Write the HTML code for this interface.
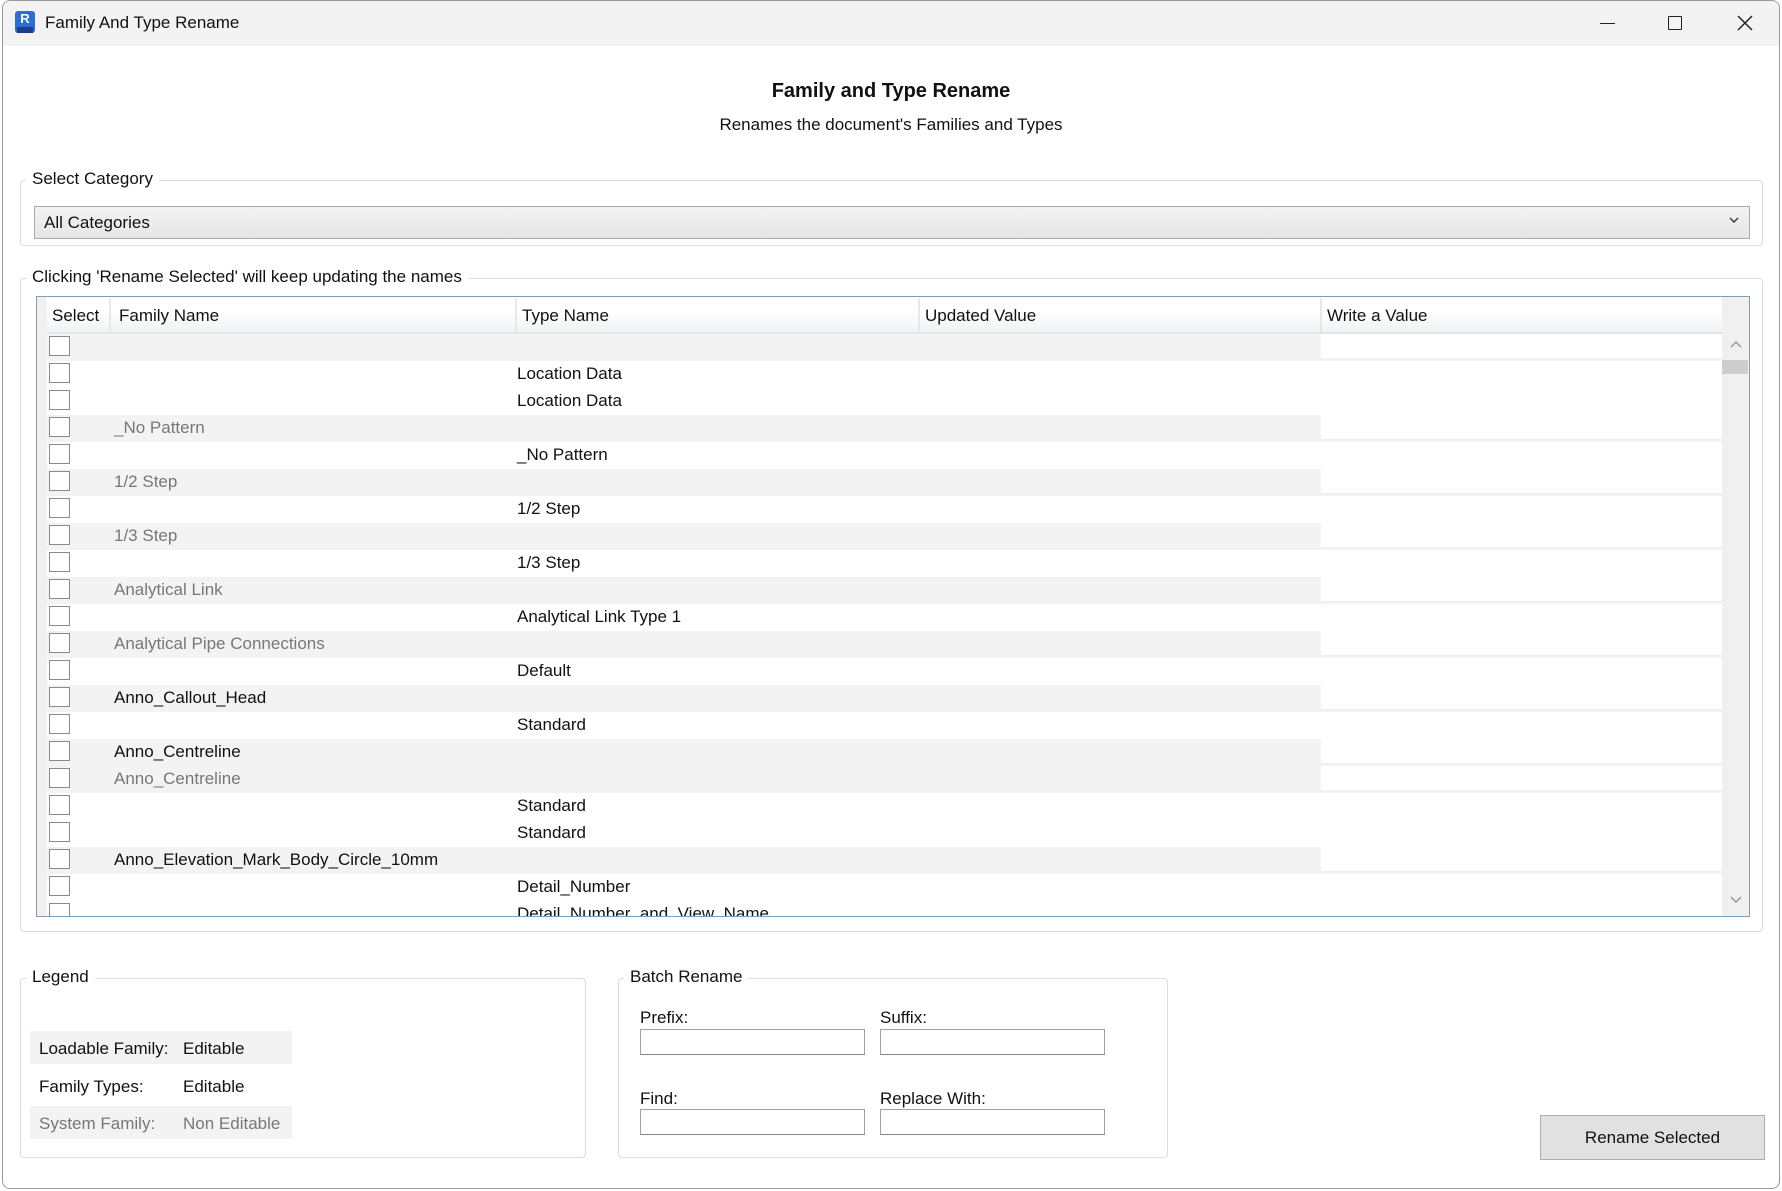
<!DOCTYPE html>
<html><head><meta charset="utf-8"><style>
*{box-sizing:border-box;margin:0;padding:0}
body{width:1782px;height:1191px;background:#fff;font-family:"Liberation Sans",sans-serif;font-size:17px;color:#111;position:relative;overflow:hidden}
.abs{position:absolute}
.win{left:2px;top:0;width:1778px;height:1189px;border:1px solid #9a9a9a;border-radius:8px;background:#fff;overflow:hidden}
.title{left:0;top:0;width:100%;height:45px;background:#f3f3f3}
.gb{border:1px solid #d5dde5;border-radius:4px}
.gl{background:#fff;padding:0 6px;font-size:17px}
.cb{position:absolute;left:2px;width:21px;height:20px;border:1.5px solid #8a8a8a;background:#fff}
.row{position:absolute;left:10px;width:1675px;height:27px}
.row.g{background:#f3f3f3}
.row .w{position:absolute;left:1274px;width:401px;top:0;height:25px;background:#fff;border-bottom:1px solid #eee}
.t{position:absolute;top:3px;font-size:17px}
.gr{color:#777}
.inp{position:absolute;height:26px;width:225px;border:1px solid #a0a0a0;border-bottom-color:#888;background:#fff}
</style></head><body>
<div class="abs win">
 <div class="abs title"></div>
 <div class="abs" style="left:12px;top:10px;width:20px;height:22px;background:#2a6fd6;border-radius:3px;color:#fff;font-size:13px;font-weight:bold;text-align:center;line-height:16px">R<div style="background:#1b3f88;height:6px;margin:0 2px"></div></div>
 <div class="abs" style="left:42px;top:12px;font-size:17px">Family And Type Rename</div>
 <div class="abs" style="left:1597px;top:22px;width:15px;height:1px;background:#222"></div>
 <div class="abs" style="left:1665px;top:15px;width:14px;height:14px;border:1.5px solid #222;border-radius:1px"></div>
 <svg class="abs" style="left:1734px;top:14px" width="16" height="16"><path d="M1 1L15 15M15 1L1 15" stroke="#222" stroke-width="1.5"/></svg>

 <div class="abs" style="left:0;width:100%;top:79px;text-align:center;font-weight:bold;font-size:20px">Family and Type Rename</div>
 <div class="abs" style="left:0;width:100%;top:114px;text-align:center;font-size:17px">Renames the document's Families and Types</div>

 <div class="abs gb" style="left:17px;top:179px;width:1743px;height:66px"></div>
 <div class="abs gl" style="left:23px;top:168px">Select Category</div>
 <div class="abs" style="left:31px;top:205px;width:1716px;height:33px;border:1px solid #aaa;background:linear-gradient(#f3f3f3,#e6e6e6)"></div>
 <div class="abs" style="left:41px;top:212px">All Categories</div>
 <svg class="abs" style="left:1725px;top:214px" width="12" height="10"><path d="M2 3L6 7L10 3" stroke="#333" fill="none" stroke-width="1.4"/></svg>

 <div class="abs gb" style="left:17px;top:277px;width:1743px;height:654px"></div>
 <div class="abs gl" style="left:23px;top:266px">Clicking 'Rename Selected' will keep updating the names</div>

 <div class="abs" style="left:33px;top:295px;width:1714px;height:621px;border:1px solid #7f9db9;overflow:hidden;background:#fff">
  <div class="abs" style="left:0;top:0;width:10px;height:621px;background:#f0f0f0"></div>
  <div class="abs" style="left:10px;top:1px;width:1675px;height:36px;background:linear-gradient(#fff 40%,#f1f2f4);border-bottom:2px solid #e3e5e8"></div>
  <div class="abs" style="left:72px;top:1px;width:2px;height:34px;background:#e6e8ea"></div>
  <div class="abs" style="left:478px;top:1px;width:2px;height:34px;background:#e6e8ea"></div>
  <div class="abs" style="left:881px;top:1px;width:2px;height:34px;background:#e6e8ea"></div>
  <div class="abs" style="left:1283px;top:1px;width:2px;height:34px;background:#e6e8ea"></div>
  <div class="t" style="left:15px;top:9px">Select</div>
  <div class="t" style="left:82px;top:9px">Family Name</div>
  <div class="t" style="left:485px;top:9px">Type Name</div>
  <div class="t" style="left:888px;top:9px">Updated Value</div>
  <div class="t" style="left:1290px;top:9px">Write a Value</div>

  <div class="row g" style="top:37px"><div class="w"></div><div class="cb" style="top:2px"></div></div>
  <div class="row" style="top:64px"><div class="cb" style="top:2px"></div><div class="t" style="left:470px">Location Data</div></div>
  <div class="row" style="top:91px"><div class="cb" style="top:2px"></div><div class="t" style="left:470px">Location Data</div></div>
  <div class="row g" style="top:118px"><div class="w"></div><div class="cb" style="top:2px"></div><div class="t gr" style="left:67px">_No Pattern</div></div>
  <div class="row" style="top:145px"><div class="cb" style="top:2px"></div><div class="t" style="left:470px">_No Pattern</div></div>
  <div class="row g" style="top:172px"><div class="w"></div><div class="cb" style="top:2px"></div><div class="t gr" style="left:67px">1/2 Step</div></div>
  <div class="row" style="top:199px"><div class="cb" style="top:2px"></div><div class="t" style="left:470px">1/2 Step</div></div>
  <div class="row g" style="top:226px"><div class="w"></div><div class="cb" style="top:2px"></div><div class="t gr" style="left:67px">1/3 Step</div></div>
  <div class="row" style="top:253px"><div class="cb" style="top:2px"></div><div class="t" style="left:470px">1/3 Step</div></div>
  <div class="row g" style="top:280px"><div class="w"></div><div class="cb" style="top:2px"></div><div class="t gr" style="left:67px">Analytical Link</div></div>
  <div class="row" style="top:307px"><div class="cb" style="top:2px"></div><div class="t" style="left:470px">Analytical Link Type 1</div></div>
  <div class="row g" style="top:334px"><div class="w"></div><div class="cb" style="top:2px"></div><div class="t gr" style="left:67px">Analytical Pipe Connections</div></div>
  <div class="row" style="top:361px"><div class="cb" style="top:2px"></div><div class="t" style="left:470px">Default</div></div>
  <div class="row g" style="top:388px"><div class="w"></div><div class="cb" style="top:2px"></div><div class="t" style="left:67px">Anno_Callout_Head</div></div>
  <div class="row" style="top:415px"><div class="cb" style="top:2px"></div><div class="t" style="left:470px">Standard</div></div>
  <div class="row g" style="top:442px"><div class="w"></div><div class="cb" style="top:2px"></div><div class="t" style="left:67px">Anno_Centreline</div></div>
  <div class="row g" style="top:469px"><div class="w"></div><div class="cb" style="top:2px"></div><div class="t gr" style="left:67px">Anno_Centreline</div></div>
  <div class="row" style="top:496px"><div class="cb" style="top:2px"></div><div class="t" style="left:470px">Standard</div></div>
  <div class="row" style="top:523px"><div class="cb" style="top:2px"></div><div class="t" style="left:470px">Standard</div></div>
  <div class="row g" style="top:550px"><div class="w"></div><div class="cb" style="top:2px"></div><div class="t" style="left:67px">Anno_Elevation_Mark_Body_Circle_10mm</div></div>
  <div class="row" style="top:577px"><div class="cb" style="top:2px"></div><div class="t" style="left:470px">Detail_Number</div></div>
  <div class="row" style="top:604px"><div class="cb" style="top:2px"></div><div class="t" style="left:470px">Detail_Number_and_View_Name</div></div>

  <div class="abs" style="left:1685px;top:0;width:28px;height:621px;background:#f0f0f0"></div>
  <div class="abs" style="left:1685px;top:63px;width:26px;height:14px;background:#cdcdcd"></div>
  <svg class="abs" style="left:1692px;top:42px" width="14" height="10"><path d="M2 8L7 3L12 8" stroke="#999" fill="none" stroke-width="1.5"/></svg>
  <svg class="abs" style="left:1692px;top:598px" width="14" height="10"><path d="M2 2L7 7L12 2" stroke="#999" fill="none" stroke-width="1.5"/></svg>
 </div>

 <div class="abs gb" style="left:17px;top:977px;width:566px;height:180px"></div>
 <div class="abs gl" style="left:23px;top:966px">Legend</div>
 <div class="abs" style="left:27px;top:1030px;width:262px;height:33px;background:#f3f3f3"></div>
 <div class="abs" style="left:27px;top:1105px;width:262px;height:33px;background:#f3f3f3"></div>
 <div class="abs" style="left:36px;top:1038px">Loadable Family:</div><div class="abs" style="left:180px;top:1038px">Editable</div>
 <div class="abs" style="left:36px;top:1076px">Family Types:</div><div class="abs" style="left:180px;top:1076px">Editable</div>
 <div class="abs gr" style="left:36px;top:1113px">System Family:</div><div class="abs gr" style="left:180px;top:1113px">Non Editable</div>

 <div class="abs gb" style="left:615px;top:977px;width:550px;height:180px"></div>
 <div class="abs gl" style="left:621px;top:966px">Batch Rename</div>
 <div class="abs" style="left:637px;top:1007px">Prefix:</div>
 <div class="abs" style="left:877px;top:1007px">Suffix:</div>
 <div class="inp" style="left:637px;top:1028px"></div>
 <div class="inp" style="left:877px;top:1028px"></div>
 <div class="abs" style="left:637px;top:1088px">Find:</div>
 <div class="abs" style="left:877px;top:1088px">Replace With:</div>
 <div class="inp" style="left:637px;top:1108px"></div>
 <div class="inp" style="left:877px;top:1108px"></div>

 <div class="abs" style="left:1537px;top:1114px;width:225px;height:45px;background:#e1e1e1;border:1px solid #adadad;text-align:center;line-height:43px;font-size:17px">Rename Selected</div>
</div>
</body></html>
